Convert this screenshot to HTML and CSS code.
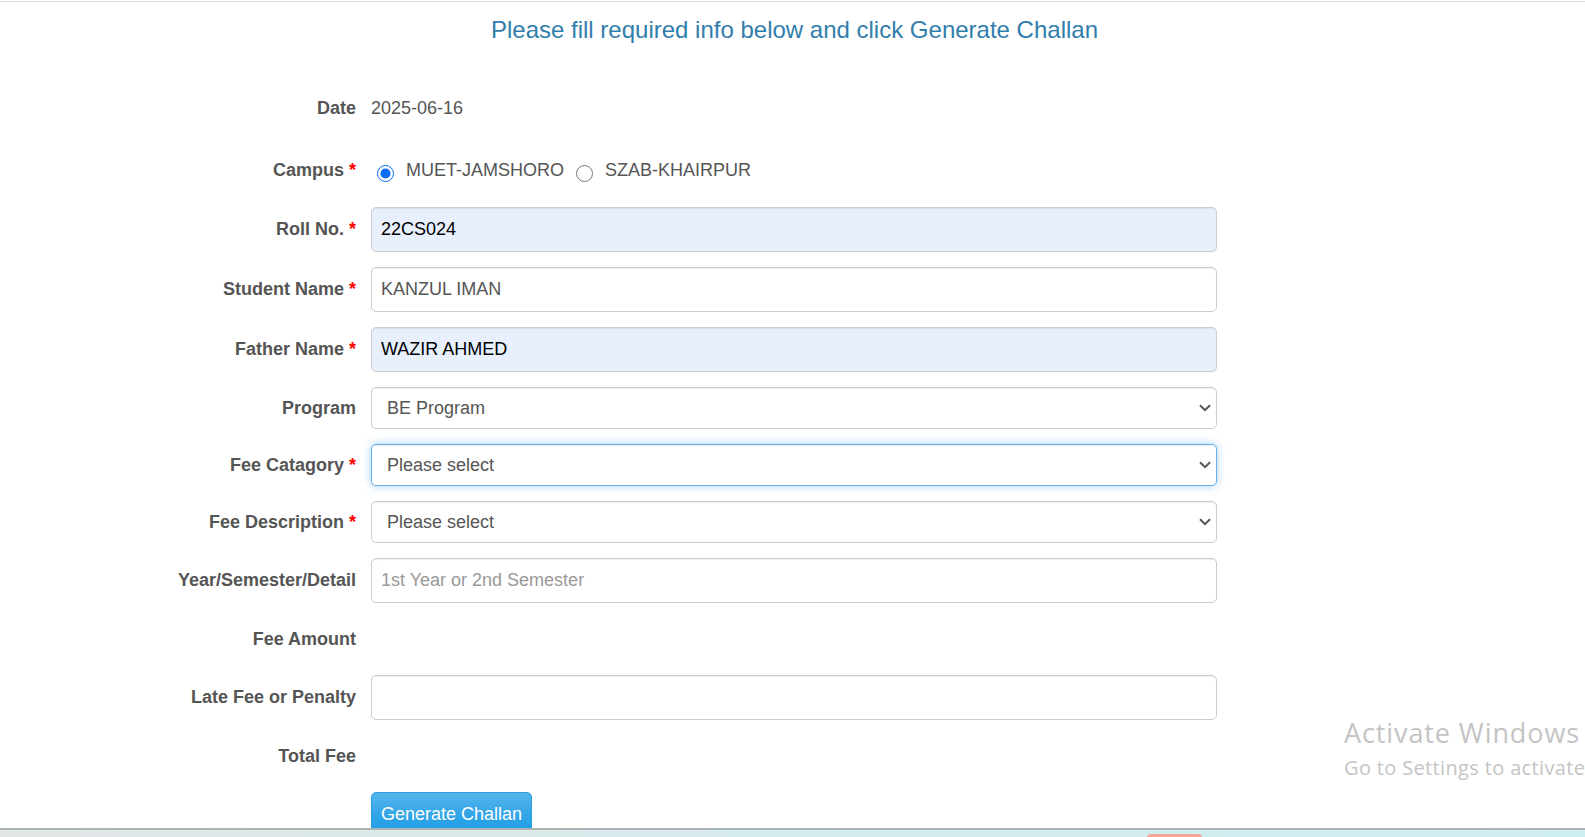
FILE: index.html
```html
<!DOCTYPE html>
<html lang="en">
<head>
<meta charset="utf-8">
<title>Generate Challan</title>
<link rel="stylesheet" href="styles.css">
</head>
<body>
<div class="rule"></div>
<h3 class="title">Please fill required info below and click Generate Challan</h3>

<form class="form">
  <div class="group group-date">
    <label class="label">Date</label>
    <div class="static">2025-06-16</div>
  </div>

  <div class="group group-campus">
    <label class="label">Campus <span class="req">*</span></label>
    <div class="radios">
      <label class="radio"><input type="radio" name="campus" checked> MUET-JAMSHORO</label>
      <label class="radio"><input type="radio" name="campus"> SZAB-KHAIRPUR</label>
    </div>
  </div>

  <div class="group">
    <label class="label">Roll No. <span class="req">*</span></label>
    <input class="control autofill" type="text" value="22CS024">
  </div>

  <div class="group">
    <label class="label">Student Name <span class="req">*</span></label>
    <input class="control" type="text" value="KANZUL IMAN">
  </div>

  <div class="group">
    <label class="label">Father Name <span class="req">*</span></label>
    <input class="control autofill" type="text" value="WAZIR AHMED">
  </div>

  <div class="group">
    <label class="label">Program</label>
    <div class="select-wrap">
      <select class="control select"><option>BE Program</option></select>
      <svg class="chevron" viewBox="0 0 12 8" width="12" height="8"><path d="M1 1.2 L6 6.2 L11 1.2" fill="none" stroke="#555" stroke-width="2"/></svg>
    </div>
  </div>

  <div class="group">
    <label class="label">Fee Catagory <span class="req">*</span></label>
    <div class="select-wrap">
      <select class="control select focused"><option>Please select</option></select>
      <svg class="chevron" viewBox="0 0 12 8" width="12" height="8"><path d="M1 1.2 L6 6.2 L11 1.2" fill="none" stroke="#555" stroke-width="2"/></svg>
    </div>
  </div>

  <div class="group">
    <label class="label">Fee Description <span class="req">*</span></label>
    <div class="select-wrap">
      <select class="control select"><option>Please select</option></select>
      <svg class="chevron" viewBox="0 0 12 8" width="12" height="8"><path d="M1 1.2 L6 6.2 L11 1.2" fill="none" stroke="#555" stroke-width="2"/></svg>
    </div>
  </div>

  <div class="group">
    <label class="label">Year/Semester/Detail</label>
    <input class="control" type="text" placeholder="1st Year or 2nd Semester">
  </div>

  <div class="group group-static">
    <label class="label">Fee Amount</label>
    <div class="static"></div>
  </div>

  <div class="group">
    <label class="label">Late Fee or Penalty</label>
    <input class="control" type="text">
  </div>

  <div class="group group-static">
    <label class="label">Total Fee</label>
    <div class="static"></div>
  </div>

  <div class="group">
    <div></div>
    <div><button type="button" class="btn">Generate Challan</button></div>
  </div>
</form>

<div class="watermark">
  <div class="wm-title">Activate Windows</div>
  <div class="wm-sub">Go to Settings to activate</div>
</div>

<div class="taskbar"><span class="taskbar-item"></span></div>
</body>
</html>
```

FILE: styles.css
```css
html, body {
  margin: 0;
  padding: 0;
}
body {
  width: 1585px;
  height: 837px;
  overflow: hidden;
  background: #fff;
  font-family: "Liberation Sans", Arial, sans-serif;
  color: #555;
  font-size: 18px;
  position: relative;
}
.rule {
  margin-top: 1px;
  height: 1px;
  background: #e1e1e1;
}
.title {
  margin: 14px 0 0 0;
  text-align: center;
  font-weight: normal;
  font-size: 24px;
  line-height: 27px;
  color: #317eac;
  padding-left: 4px;
}
.form {
  margin-top: 44px;
}
.group {
  display: grid;
  grid-template-columns: 356px 846px;
  column-gap: 15px;
  align-items: center;
  margin-bottom: 15px;
}
.group-date {
  height: 42px;
  margin-bottom: 19px;
}
.group-campus {
  height: 44px;
}
.group-static {
  height: 42px;
}
.label {
  text-align: right;
  font-weight: bold;
  color: #555;
  white-space: nowrap;
}
.req {
  color: #f00;
}
.static {
  color: #555;
}
.radios {
  display: flex;
  align-items: center;
  padding-top: 1px;
}
.radio {
  display: inline-flex;
  align-items: center;
  margin-right: 12px;
  color: #555;
}
.radio input {
  width: 17px;
  height: 17px;
  margin: 5px 12px 0 6px;
  accent-color: #0b6cf5;
}
.radio + .radio input {
  margin-left: 0;
}
.control {
  box-sizing: border-box;
  width: 846px;
  height: 45px;
  margin: 0;
  padding: 0 9px;
  border: 1px solid #ccc;
  border-radius: 5px;
  font-family: "Liberation Sans", Arial, sans-serif;
  font-size: 18px;
  color: #555;
  background: #fff;
  box-shadow: inset 0 1px 1px rgba(0, 0, 0, 0.075);
  outline: none;
}
.control::placeholder {
  color: #999;
}
.autofill {
  background: #e8f0fe;
  color: #000;
}
.select-wrap {
  position: relative;
  width: 846px;
  height: 42px;
}
.select {
  height: 42px;
  padding: 0 15px;
  appearance: none;
  -webkit-appearance: none;
}
.focused {
  border-color: #66afe9;
  box-shadow: inset 0 1px 1px rgba(0, 0, 0, 0.075), 0 0 9px rgba(102, 175, 233, 0.6);
}
.chevron {
  position: absolute;
  right: 6px;
  top: 17px;
  pointer-events: none;
}
.btn {
  box-sizing: border-box;
  height: 43px;
  padding: 1px 9px 0;
  border: 1px solid #2b9ee3;
  border-radius: 5px;
  background: linear-gradient(#54b4eb, #2fa4e7 60%, #1d9ce5);
  color: #fff;
  font-family: "Liberation Sans", Arial, sans-serif;
  font-size: 18px;
  line-height: 1;
  text-shadow: 0 1px 0 rgba(0, 0, 0, 0.05);
}
.watermark {
  position: absolute;
  left: 1344px;
  top: 716px;
  white-space: nowrap;
  color: #c4c4c4;
  font-family: "Open Sans", "Noto Sans", sans-serif;
}
.wm-title {
  font-size: 27px;
  line-height: 34px;
  letter-spacing: 0.9px;
}
.wm-sub {
  font-size: 20px;
  line-height: 26px;
  margin-top: 5px;
  letter-spacing: 0.35px;
}
.taskbar {
  position: fixed;
  left: 0;
  right: 0;
  bottom: 0;
  height: 7px;
  border-top: 2px solid #adb5b5;
  background: linear-gradient(90deg, #e2e6e6, #d6ecee 50%, #cfeef0);
}
.taskbar-item {
  position: absolute;
  left: 1147px;
  top: 4px;
  width: 55px;
  height: 6px;
  border-radius: 4px 4px 0 0;
  background: #f2a496;
}
```
